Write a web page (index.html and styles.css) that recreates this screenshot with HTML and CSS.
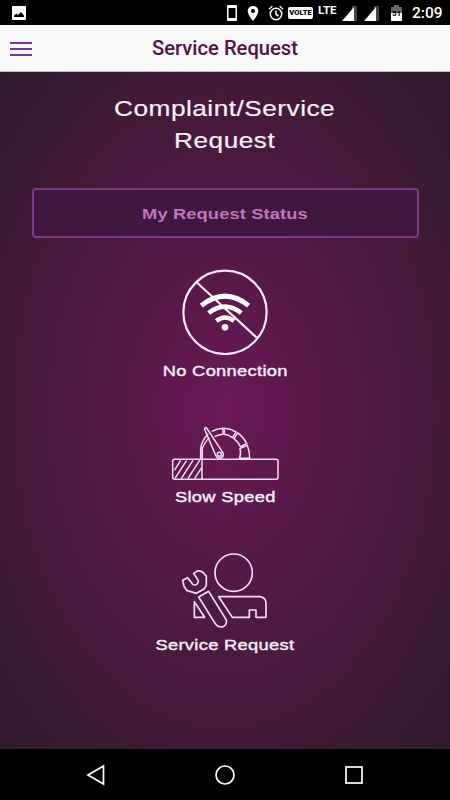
FILE: index.html
```html
<!DOCTYPE html>
<html lang="en">
<head>
    <meta charset="UTF-8">
    <meta name="viewport" content="width=device-width, initial-scale=1.0">
    <title>Service Request</title>
    <link rel="stylesheet" href="styles.css">
</head>
<body>
<div class="status-bar">
    <svg class="picture" width="14" height="14" viewBox="0 0 14 14">
        <rect width="14" height="14" rx="1" fill="#fff"/>
        <path d="M2 11V9.500L4.500 7.500L6 9L9 6L12 9.500V11Z" fill="#000"/>
    </svg>
    <div class="status-icons">
        <svg width="12" height="18" viewBox="0 0 12 18">
            <rect x="1" y="1" width="10" height="16" rx="1" fill="#fff"/>
            <rect x="2.500" y="4" width="7" height="10" fill="#000"/>
        </svg>
        <svg width="12" height="17" viewBox="0 0 12 17">
            <path d="M6 1C3 1 .7 3.200 .7 6C.7 10 6 16 6 16S11.300 10 11.300 6C11.300 3.200 9 1 6 1Z" fill="#fff"/>
            <circle cx="6" cy="6" r="2" fill="#000"/>
        </svg>
        <svg width="16" height="16" viewBox="0 0 16 16" fill="none" stroke="#fff" stroke-width="1.500">
            <circle cx="8" cy="9" r="5.700"/>
            <path d="M8 5.500V9.500L10.500 11M1 4.200L4.300 1.200M15 4.200L11.700 1.200"/>
        </svg>
        <span class="volte">VOLTE</span>
        <span class="lte">LTE</span>
        <svg class="signal" width="15" height="15" viewBox="0 0 15 15">
            <path d="M10 0H15V15H10Z" fill="#444"/>
            <path d="M12 1V15H0Z" fill="#fff"/>
        </svg>
        <svg class="signal" width="15" height="15" viewBox="0 0 15 15">
            <path d="M10 0H15V15H10Z" fill="#444"/>
            <path d="M12 1V15H0Z" fill="#fff"/>
        </svg>
        <svg class="battery" width="11" height="16" viewBox="0 0 11 16">
            <path d="M0 2H3V0H8V2H11V9H0Z" fill="#666"/>
            <path d="M0 8H11V16H0Z" fill="#fff"/>
            <text x="5.500" y="11" text-anchor="middle">51</text>
        </svg>
        <span class="clock">2:09</span>
    </div>
</div>
<header class="header">
    <div class="menu">
        <span></span>
        <span></span>
        <span></span>
    </div>
    <div class="header-title">Service Request</div>
</header>
<main class="content">
    <h1><span class="wide">Complaint/Service<br>Request</span></h1>
    <button class="status-button"><span class="wide">My Request Status</span></button>
    <div class="option no-connection">
        <svg width="86" height="86" viewBox="96 27 258 258" fill="none" stroke="#fdeefa">
            <circle cx="225" cy="157" r="125" stroke-width="6.500"/>
            <path d="M139 66L320 233" stroke-width="6.500"/>
            <path d="M154 137Q225 80 296 137" stroke="#fff" stroke-width="15"/>
            <path d="M176 159Q225 121 274 159" stroke="#fff" stroke-width="14"/>
            <path d="M199 183Q225 162 252 183" stroke="#fff" stroke-width="13"/>
            <circle cx="225" cy="202" r="10" fill="#fff" stroke="none"/>
        </svg>
        <span class="wide">No Connection</span>
    </div>
    <div class="option slow-speed">
        <svg width="110" height="56" viewBox="60 33 330 168" fill="none" stroke="#f7dff2" stroke-width="4.500">
            <rect x="68" y="133" width="316" height="60" rx="6"/>
            <path d="M156 133V193"/>
            <path d="M73 166L92 136M75 190L110 136M94 190L129 136M114 190L149 136M134 190L155 158"/>
            <path d="M152 131V100L159 96C164 84 170 75 178 69M157 131V99M152 98C156 80 164 68 174 58M185 49Q201 41 219 40V58Q204 59 194 65"/>
            <path d="M223 40Q242 41 258 51L248 68Q237 60 223 58Z"/>
            <path d="M263 54Q280 65 290 86L271 95Q264 80 252 71Z"/>
            <path d="M292 91Q299 109 299 130H269Q274 113 270 101Z"/>
            <path d="M169 38Q164 35 164 43L197 121C201 132 216 133 220 121Q221 115 216 109Z"/>
            <circle cx="208" cy="118" r="6"/>
        </svg>
        <span class="wide">Slow Speed</span>
    </div>
    <div class="option service-request">
        <svg width="88" height="78" viewBox="96 21 264 234" fill="none" stroke="#f7dff2" stroke-width="5" stroke-linejoin="round">
            <circle cx="254" cy="83" r="56"/>
            <path d="M101 106L116 98L131 118Q137 122 143 118Q149 114 148 107L134 85L145 78Q155 76 163 83L172 94V121L165 132L142 145L113 136L105 124Z"/>
            <path d="M149 156L179 139L232 225Q235 239 222 245Q209 249 200 238Z"/>
            <path d="M136 170V217H167Z"/>
            <path d="M209 155H334Q351 158 351 175V217H321V195H301V217H250Z"/>
        </svg>
        <span class="wide">Service Request</span>
    </div>
</main>
<nav class="nav-bar">
    <svg width="20" height="22" viewBox="0 0 20 22"><path d="M17.500 2V20L2 11Z"/></svg>
    <svg width="22" height="22" viewBox="0 0 22 22"><circle cx="11" cy="11" r="9"/></svg>
    <svg width="20" height="20" viewBox="0 0 20 20"><rect x="2" y="2" width="16" height="16"/></svg>
</nav>
</body>
</html>
```
FILE: styles.css
```css
* {
  box-sizing: border-box;
}

body {
  margin: 0;
  height: 800px;
  display: flex;
  flex-direction: column;
  font-family: "Liberation Sans", Arial, sans-serif;
  background-color: #000;
}

svg {
  display: block;
  flex-shrink: 0;
}

.status-bar {
  height: 25px;
  padding: 1px 7px 0 12px;
  display: flex;
  align-items: center;
  justify-content: space-between;
  color: #fff;
  font-family: Roboto, sans-serif;
}

.status-icons {
  display: flex;
  align-items: center;
  height: 24px;
}

.status-icons > * + * {
  margin-left: 9px;
}

.status-icons .volte {
  width: 25px;
  height: 12px;
  margin-left: 4px;
  border-radius: 2px;
  background-color: #fff;
  color: #000;
  font-size: 7.5px;
  font-weight: 900;
  line-height: 12px;
  text-align: center;
}

.status-icons .lte {
  width: 19px;
  margin-left: 5px;
  padding-bottom: 7px;
  font-size: 11.5px;
  font-weight: 700;
  line-height: 12px;
}

.status-icons .signal {
  margin-left: 5px;
}

.status-icons .signal + .signal {
  margin-left: 7px;
}

.status-icons .battery {
  margin-left: 12px;
}

.battery text {
  font-size: 8px;
  font-weight: 700;
}

.status-icons .clock {
  width: 31px;
  margin-left: 10px;
  font-size: 15.5px;
  font-weight: 500;
  line-height: 25px;
}

.header {
  height: 47px;
  padding: 0 10px;
  display: grid;
  grid-template-columns: 22px 1fr 22px;
  align-items: center;
  background-color: #f8f8f8;
  border-bottom: 1px solid #c4b8c4;
}

.menu {
  display: grid;
  gap: 4px;
  padding-top: 2px;
}

.menu span {
  height: 2px;
  background-color: #7b3590;
}

.header-title {
  color: #551246;
  font-family: Roboto, sans-serif;
  font-size: 20.2px;
  font-weight: 500;
  text-align: center;
}

.content {
  height: 677px;
  padding: 21px 32px 0;
  display: flex;
  flex-direction: column;
  align-items: center;
  background: radial-gradient(ellipse at center, #6b1956 0%, #571948 30%, #431a3a 65%, #2d1a2d 100%);
}

/* extended letterforms */
.wide {
  display: inline-block;
  white-space: nowrap;
  transform: scaleX(1.22);
}

h1 {
  margin: 0;
  color: #fdf0fa;
  font-size: 21.5px;
  font-weight: 400;
  letter-spacing: 0.4px;
  line-height: 32px;
  text-align: center;
  -webkit-text-stroke: 0.2px #fdf0fa;
}

.status-button {
  width: 387px;
  height: 50px;
  margin: 31px 0;
  padding: 0;
  border: 2px solid #7b3c88;
  border-radius: 4px;
  background-color: #3f183f;
  color: #bd78b8;
  font-family: inherit;
  font-size: 15px;
  font-weight: 700;
  letter-spacing: 0.1px;
}

.option {
  display: flex;
  flex-direction: column;
  align-items: center;
  color: #fdeefa;
  font-size: 15px;
  letter-spacing: 0.25px;
  line-height: 20px;
  -webkit-text-stroke: 0.4px #fdeefa;
}

.no-connection {
  gap: 6px;
  margin-bottom: 45px;
}

.slow-speed {
  gap: 5px;
  margin-bottom: 45px;
}

.service-request {
  gap: 5px;
}

.nav-bar {
  height: 51px;
  padding: 0 86px;
  display: flex;
  align-items: center;
  justify-content: space-between;
}

.nav-bar svg {
  fill: none;
  stroke: #fff;
  stroke-width: 1.7;
}
```
